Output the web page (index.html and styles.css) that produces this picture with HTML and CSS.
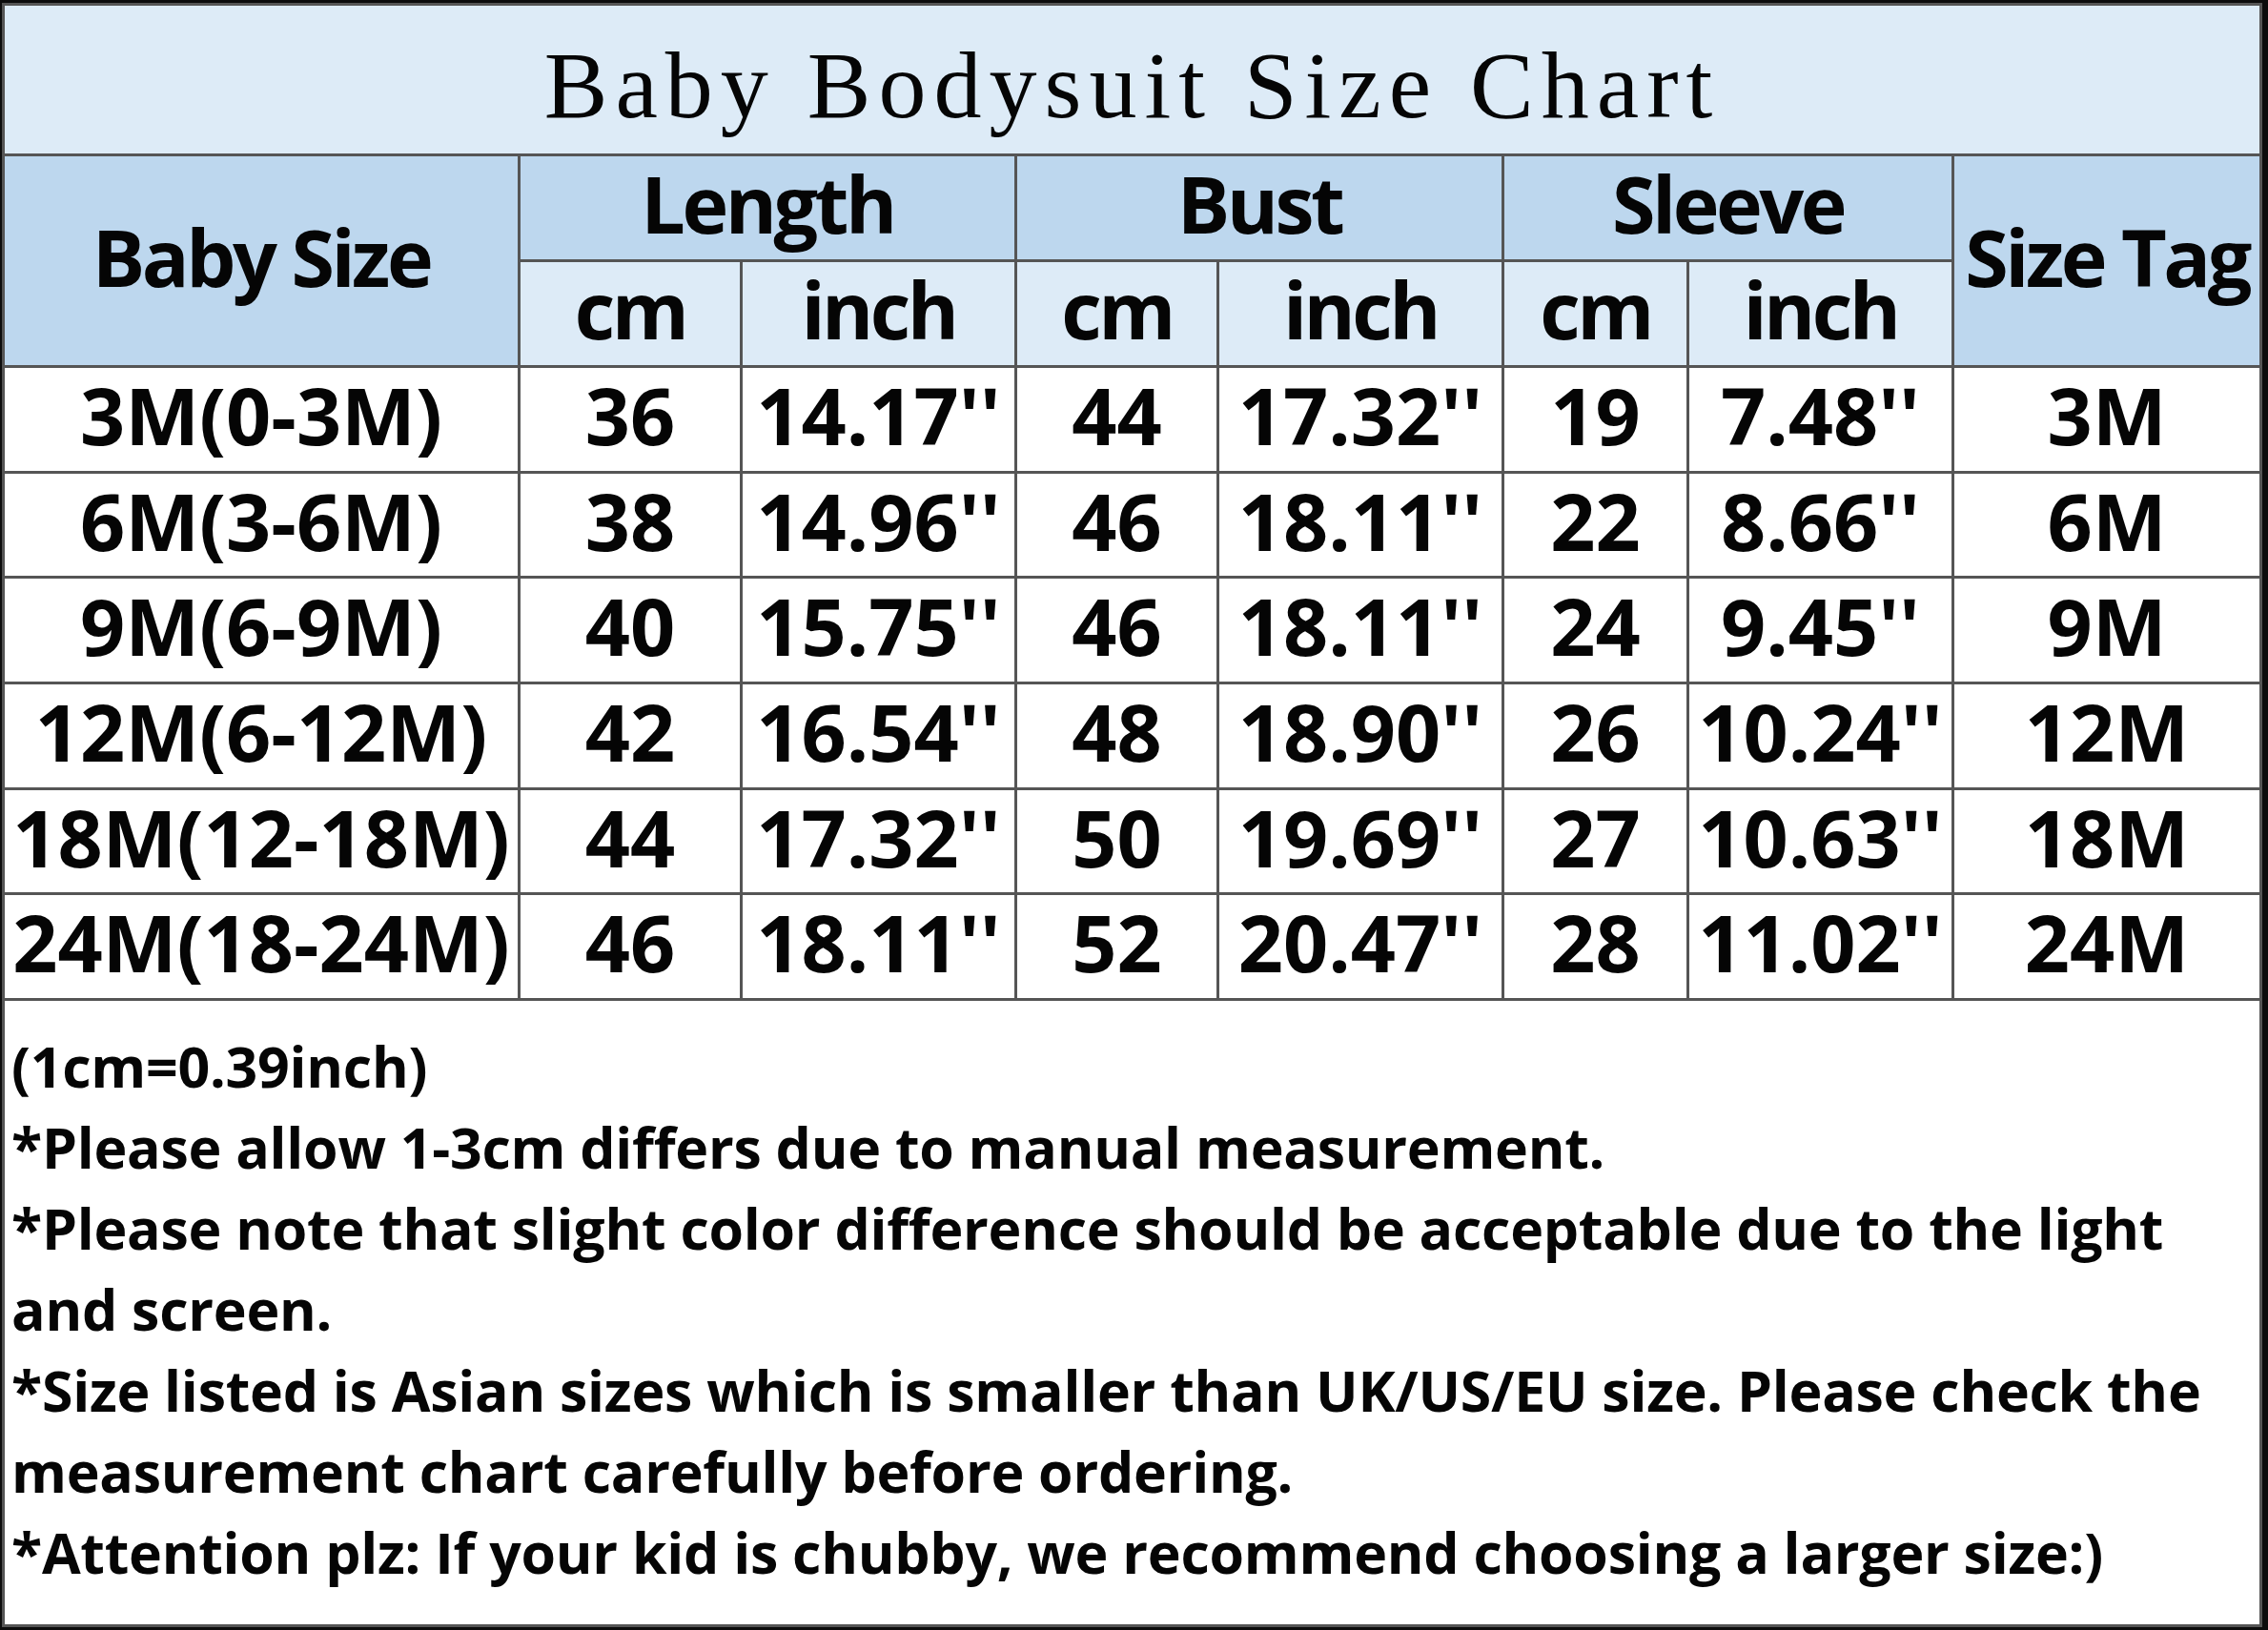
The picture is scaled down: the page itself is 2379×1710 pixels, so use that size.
FILE: index.html
```html
<!DOCTYPE html>
<html lang="en">
<head>
<meta charset="utf-8">
<title>Baby Bodysuit Size Chart</title>
<link rel="stylesheet" href="styles.css">
</head>
<body>
<div class="chart">
  <div class="title"><span>Baby Bodysuit Size Chart</span></div>

  <div class="cell head dark rows2">Baby Size</div>
  <div class="cell head dark span2">Length</div>
  <div class="cell head dark span2">Bust</div>
  <div class="cell head dark span2">Sleeve</div>
  <div class="cell head dark rows2">Size Tag</div>

  <div class="cell head light">cm</div>
  <div class="cell head light">inch</div>
  <div class="cell head light">cm</div>
  <div class="cell head light">inch</div>
  <div class="cell head light">cm</div>
  <div class="cell head light">inch</div>

  <div class="cell">3M(0-3M)</div><div class="cell">36</div><div class="cell">14.17&#39;&#39;</div><div class="cell">44</div><div class="cell">17.32&#39;&#39;</div><div class="cell">19</div><div class="cell">7.48&#39;&#39;</div><div class="cell">3M</div>
  <div class="cell">6M(3-6M)</div><div class="cell">38</div><div class="cell">14.96&#39;&#39;</div><div class="cell">46</div><div class="cell">18.11&#39;&#39;</div><div class="cell">22</div><div class="cell">8.66&#39;&#39;</div><div class="cell">6M</div>
  <div class="cell">9M(6-9M)</div><div class="cell">40</div><div class="cell">15.75&#39;&#39;</div><div class="cell">46</div><div class="cell">18.11&#39;&#39;</div><div class="cell">24</div><div class="cell">9.45&#39;&#39;</div><div class="cell">9M</div>
  <div class="cell">12M(6-12M)</div><div class="cell">42</div><div class="cell">16.54&#39;&#39;</div><div class="cell">48</div><div class="cell">18.90&#39;&#39;</div><div class="cell">26</div><div class="cell">10.24&#39;&#39;</div><div class="cell">12M</div>
  <div class="cell">18M(12-18M)</div><div class="cell">44</div><div class="cell">17.32&#39;&#39;</div><div class="cell">50</div><div class="cell">19.69&#39;&#39;</div><div class="cell">27</div><div class="cell">10.63&#39;&#39;</div><div class="cell">18M</div>
  <div class="cell">24M(18-24M)</div><div class="cell">46</div><div class="cell">18.11&#39;&#39;</div><div class="cell">52</div><div class="cell">20.47&#39;&#39;</div><div class="cell">28</div><div class="cell">11.02&#39;&#39;</div><div class="cell">24M</div>

  <div class="notes">
    <p>(1cm=0.39inch)</p>
    <p>*Please allow 1-3cm differs due to manual measurement.</p>
    <p>*Please note that slight color difference should be acceptable due to the light<br>and screen.</p>
    <p>*Size listed is Asian sizes which is smaller than UK/US/EU size. Please check the<br>measurement chart carefully before ordering.</p>
    <p>*Attention plz: If your kid is chubby, we recommend choosing a larger size:)</p>
  </div>
</div>
</body>
</html>
```

FILE: styles.css
```css
html, body {
  margin: 0;
  padding: 0;
  background: #0c0c0c;
}

body {
  width: 2379px;
  height: 1710px;
  overflow: hidden;
}

.chart {
  margin: 3px 0 0 2px;
  width: 2371px;
  box-sizing: border-box;
  padding: 3px;
  background: #555555;
  display: grid;
  grid-template-columns: 538px 230px 285px 209px 296px 191px 275px 320px;
  grid-template-rows: 155px 108px 108px repeat(6, 107.67px) 654px;
  gap: 3px;
  font-family: "Open Sans", "Noto Sans", sans-serif;
  font-weight: 700;
  color: #050505;
}

.title {
  grid-column: 1 / -1;
  background: #ddebf7;
  display: flex;
  align-items: center;
  justify-content: center;
  padding-top: 12px;
  box-sizing: border-box;
  font-family: "Liberation Serif", "Times New Roman", serif;
  font-weight: 400;
  font-size: 100px;
  letter-spacing: 8px;
  line-height: 1;
  white-space: nowrap;
}

.cell {
  background: #ffffff;
  display: flex;
  align-items: center;
  justify-content: center;
  font-size: 82.6px;
  line-height: 1;
  white-space: nowrap;
  padding-bottom: 9px;
  box-sizing: border-box;
  overflow: visible;
}

.head {
  letter-spacing: -3.5px;
}

.head.dark {
  background: #bdd7ee;
}

.head.light {
  background: #ddebf7;
}

.rows2 {
  grid-row: span 2;
}

.span2 {
  grid-column: span 2;
}

.notes {
  grid-column: 1 / -1;
  background: #ffffff;
  padding: 26px 0 0 7px;
  box-sizing: border-box;
  font-size: 59px;
  line-height: 85px;
  letter-spacing: -0.25px;
  white-space: nowrap;
}

.notes p {
  margin: 0;
}
```
